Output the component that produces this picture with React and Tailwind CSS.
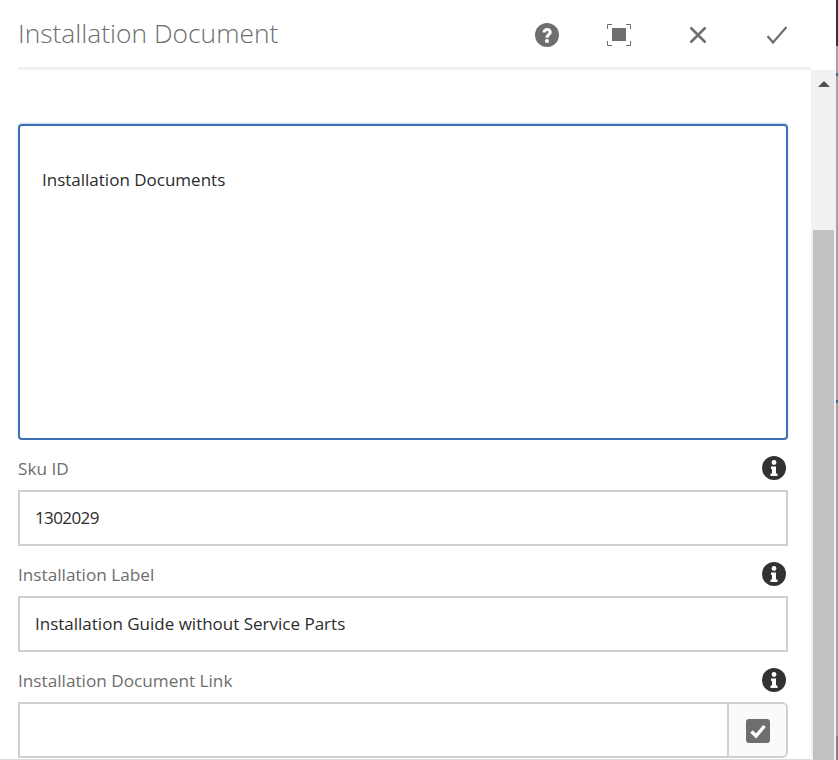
const font = { fontFamily: '"Open Sans", sans-serif' };

const InfoIcon = () => (
  <svg width="24" height="24" viewBox="0 0 24 24">
    <circle cx="12" cy="12" r="12" fill="#323232" />
    <circle cx="12" cy="6.5" r="2.4" fill="#fff" />
    <path d="M9 10.500h5v7h1.500v2.500h-7v-2.500H10v-4.500H9z" fill="#fff" />
  </svg>
);

const Field = ({ label, value, valueClass, children }) => (
  <div className="flex flex-col">
    <div className="flex h-[50px] items-center justify-between pt-[6px]">
      <span className="mt-[2px] text-[17.2px] text-[#6e6e6e]">{label}</span>
      <span className="mr-[2px] flex"><InfoIcon /></span>
    </div>
    {children || (
      <div className={`flex h-[56px] items-center border-2 border-[#d0d0d0] pl-[15px] text-[17px] text-[#2c2c2c] ${valueClass || ""}`}>
        {value}
      </div>
    )}
  </div>
);

export default function App() {
  return (
    <div className="flex h-[760px] w-[838px] overflow-hidden bg-white" style={font}>
      <div className="flex w-[811px] shrink-0 flex-col border-b border-[#dcdcdc]">
        <header className="ml-[18px] flex h-[70px] shrink-0 items-center justify-between border-b-[3px] border-[#f0f0f0]">
          <h1 className="text-[26.4px] font-light text-[#6e6e6e]">Installation Document</h1>
          <div className="mt-[3px] flex items-center">
            <button className="flex w-[74px] justify-center">
              <svg width="24" height="24" viewBox="0 0 24 24">
                <circle cx="12" cy="12" r="12" fill="#6e6e6e" />
                <path d="M7.500 9.500C7.500 6.800 9.500 5 12.200 5s4.500 1.800 4.500 4.200c0 3-3 3.200-3 5.600h-3.200c0-3.600 3-3.800 3-5.500 0-.8-.5-1.300-1.300-1.300s-1.400.6-1.400 1.500z" fill="#fff" />
                <circle cx="12" cy="18" r="2" fill="#fff" />
              </svg>
            </button>
            <button className="flex w-[70px] justify-center">
              <svg width="24" height="22" viewBox="0 0 24 22" fill="none">
                <rect x="5" y="4" width="14" height="13" fill="#6e6e6e" />
                <path d="M.5 5V.5H5M19 .5h4.500V5M23.500 17v4.500H19M5 21.500H.5V17" stroke="#6e6e6e" />
              </svg>
            </button>
            <button className="flex w-[88px] justify-center">
              <svg width="18" height="18" viewBox="0 0 18 18" fill="none">
                <path d="M1.500 1.500l15 15M16.500 1.500l-15 15" stroke="#6e6e6e" strokeWidth="2.600" />
              </svg>
            </button>
            <button className="flex w-[69px] justify-center">
              <svg width="22" height="18" viewBox="0 0 22 18" fill="none">
                <path d="M1.500 10l5.500 6.500L20.500 1" stroke="#6e6e6e" strokeWidth="2.200" />
              </svg>
            </button>
          </div>
        </header>

        <main className="flex flex-col pl-[18px] pr-[23px] pt-[54px]">
          <div className="h-[316px] rounded-[4px] border-2 border-[#3b6fb6] pl-[22px] pt-[41px] text-[17px] text-[#2c2c2c] shadow-[0_-1px_2px_rgba(50,110,200,0.3)]">
            Installation Documents
          </div>
          <Field label="Sku ID" value="1302029" valueClass="tracking-[-0.6px]" />
          <Field label="Installation Label" value="Installation Guide without Service Parts" />
          <Field label="Installation Document Link">
            <div className="flex h-[56px] rounded-r-[6px] border-2 border-[#d0d0d0]">
              <div className="flex-1 border-r-[2px] border-[#d0d0d0]" />
              <div className="flex w-[57px] items-center justify-center rounded-r-[4px] bg-[#fafafa] pt-[2px]">
                <svg width="24" height="24" viewBox="0 0 24 24" fill="none">
                  <rect width="24" height="24" rx="3" fill="#6e6e6e" />
                  <path d="M5.500 12.500l4.500 4.500 8.500-10" stroke="#fff" strokeWidth="3.400" />
                </svg>
              </div>
            </div>
          </Field>
        </main>
      </div>

      <aside className="relative mt-[70px] flex w-[25px] shrink-0 flex-col items-center bg-[#f1f1f1]">
        <div className="mt-[11px] h-0 w-0 border-x-[6px] border-b-[6px] border-x-transparent border-b-[#505050]" />
        <div className="absolute bottom-0 left-[2px] top-[160px] w-[21px] bg-[#c1c1c1]" />
      </aside>

      <div className="relative flex-1 bg-[#a3a3a3]">
        <div className="absolute left-0 top-0 h-[46px] w-full bg-[#333333]" />
        <div className="absolute left-0 top-[73px] h-[3px] w-full bg-[#2a6aa8]" />
        <div className="absolute left-0 top-[400px] h-[3px] w-full bg-[#2a6aa8]" />
        <div className="absolute bottom-0 left-0 h-[24px] w-full bg-[#808080]" />
      </div>
    </div>
  );
}
